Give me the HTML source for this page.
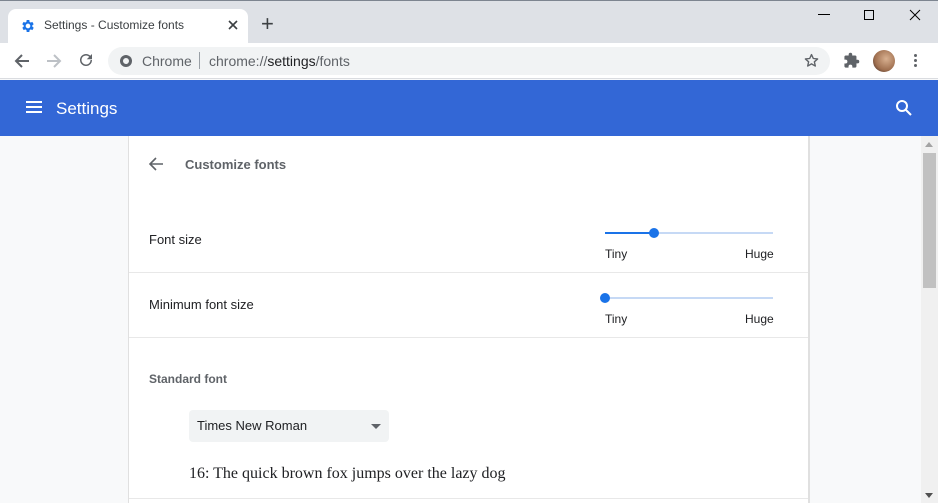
<!DOCTYPE html>
<html><head><style>
*{margin:0;padding:0;box-sizing:border-box}
body{width:938px;height:503px;overflow:hidden;font-family:"Liberation Sans",Arial,sans-serif;background:#f8f9fa;position:relative}
.abs{position:absolute}
</style></head><body>
<div class="abs" style="left:0;top:0;width:938px;height:43px;background:#dee1e6;border-top:1px solid #7d8590"></div>
<div class="abs" style="left:8px;top:9px;width:240px;height:35px;background:#fff;border-radius:8px 8px 0 0"></div>
<svg class="abs" style="left:20px;top:18px" width="16" height="16" viewBox="0 0 24 24"><path fill="#1a73e8" d="M19.4 13a7.5 7.5 0 000-2l2.1-1.6-2-3.5-2.5 1a7 7 0 00-1.7-1L15 3h-4l-.4 2.9a7 7 0 00-1.7 1l-2.5-1-2 3.5L6.6 11a7.5 7.5 0 000 2l-2.1 1.6 2 3.5 2.5-1a7 7 0 001.7 1L11 21h4l.4-2.9a7 7 0 001.7-1l2.5 1 2-3.5zM13 15.5a3.5 3.5 0 110-7 3.5 3.5 0 010 7z" transform="translate(-1 0)"/></svg>
<div class="abs" style="left:44px;top:18px;font-size:12px;color:#3c4043">Settings - Customize fonts</div>
<svg class="abs" style="left:228px;top:20px" width="10" height="10"><path d="M1 1L9 9M9 1L1 9" stroke="#3c4043" stroke-width="1.6"/></svg>
<div class="abs" style="left:261px;top:11px;font-size:22px;color:#3c4043;font-weight:300">+</div>
<div class="abs" style="left:818px;top:14px;width:12px;height:1px;background:#000"></div>
<div class="abs" style="left:864px;top:10px;width:10px;height:10px;border:1px solid #000"></div>
<svg class="abs" style="left:909px;top:9px" width="12" height="12"><path d="M1 1L11 11M11 1L1 11" stroke="#000" stroke-width="1"/></svg>
<div class="abs" style="left:0;top:43px;width:938px;height:36px;background:#fff;border-bottom:1px solid #dadce0"></div>
<svg class="abs" style="left:12px;top:52px" width="20" height="18" viewBox="0 0 20 18"><path d="M17 9H4M10 3L4 9l6 6" stroke="#5f6368" stroke-width="2" fill="none"/></svg>
<svg class="abs" style="left:44px;top:52px" width="20" height="18" viewBox="0 0 20 18"><path d="M3 9h13M10 3l6 6-6 6" stroke="#bdc1c6" stroke-width="2" fill="none"/></svg>
<svg class="abs" style="left:77px;top:51px" width="18" height="18" viewBox="0 0 24 24"><path fill="#5f6368" d="M17.65 6.35A7.96 7.96 0 0012 4a8 8 0 108 8h-2a6 6 0 11-1.78-4.22L13 11h7V4z"/></svg>
<div class="abs" style="left:108px;top:47px;width:722px;height:28px;background:#f1f3f4;border-radius:14px"></div>
<div class="abs" style="left:120px;top:55px;width:12px;height:12px;border-radius:50%;background:#5f6368"></div>
<div class="abs" style="left:123px;top:58px;width:6px;height:6px;border-radius:50%;background:#f1f3f4"></div>
<div class="abs" style="left:142px;top:53px;font-size:14px;color:#5f6368">Chrome</div>
<div class="abs" style="left:199px;top:52px;width:1px;height:17px;background:#9aa0a6"></div>
<div class="abs" style="left:209px;top:53px;font-size:14px;color:#5f6368">chrome://<span style="color:#202124">settings</span>/fonts</div>
<svg class="abs" style="left:804px;top:53px" width="15" height="15" viewBox="0 0 24 24"><path d="M12 2.5l2.9 6.3 6.9.7-5.2 4.6 1.5 6.8L12 17.4l-6.1 3.5 1.5-6.8-5.2-4.6 6.9-.7z" fill="none" stroke="#5f6368" stroke-width="2.2" stroke-linejoin="round"/></svg>
<svg class="abs" style="left:843px;top:52px" width="17" height="17" viewBox="0 0 24 24"><path fill="#5f6368" d="M20.5 11H19V7a2 2 0 00-2-2h-4V3.5a2.5 2.5 0 00-5 0V5H4a2 2 0 00-2 2v3.8h1.5a2.7 2.7 0 010 5.4H2V20a2 2 0 002 2h3.8v-1.5a2.7 2.7 0 015.4 0V22H17a2 2 0 002-2v-4h1.5a2.5 2.5 0 000-5z"/></svg>
<div class="abs" style="left:873px;top:50px;width:22px;height:22px;border-radius:50%;background:radial-gradient(circle at 60% 40%,#d8b090,#a07050 60%,#302020)"></div>
<div class="abs" style="left:914px;top:54px;width:3px;height:3px;border-radius:50%;background:#5f6368;box-shadow:0 5px 0 #5f6368,0 10px 0 #5f6368"></div>
<div class="abs" style="left:0;top:80px;width:938px;height:56px;background:#3367d6"></div>
<div class="abs" style="left:26px;top:101px;width:16px;height:2px;background:#fff;box-shadow:0 5px 0 #fff,0 10px 0 #fff"></div>
<div class="abs" style="left:56px;top:99px;font-size:17px;color:#fff">Settings</div>
<svg class="abs" style="left:895px;top:99px" width="18" height="18" viewBox="0 0 18 18"><circle cx="7" cy="7" r="5" stroke="#fff" stroke-width="2" fill="none"/><path d="M11 11l5 5" stroke="#fff" stroke-width="2"/></svg>
<div class="abs" style="left:128px;top:136px;width:682px;height:367px;background:#fff;border-left:1px solid #e0e0e0;border-right:2px solid #e0e0e0"></div>
<svg class="abs" style="left:148px;top:156px" width="16" height="16" viewBox="0 0 16 16"><path d="M15 8H2M8 2L2 8l6 6" stroke="#5f6368" stroke-width="1.6" fill="none"/></svg>
<div class="abs" style="left:185px;top:157px;font-size:13px;font-weight:bold;color:#5f6368">Customize fonts</div>
<div class="abs" style="left:149px;top:232px;font-size:13px;color:#202124">Font size</div>
<div class="abs" style="left:129px;top:272px;width:679px;height:1px;background:#e8e8e8"></div>
<div class="abs" style="left:149px;top:297px;font-size:13px;color:#202124">Minimum font size</div>
<div class="abs" style="left:129px;top:337px;width:679px;height:1px;background:#e8e8e8"></div>
<div class="abs" style="left:605px;top:232px;width:168px;height:2px;background:#c6d9f5"></div>
<div class="abs" style="left:605px;top:232px;width:49px;height:2px;background:#1a73e8"></div>
<div class="abs" style="left:649px;top:228px;width:10px;height:10px;border-radius:50%;background:#1a73e8"></div>
<div class="abs" style="left:605px;top:247px;font-size:12px;color:#202124">Tiny</div>
<div class="abs" style="left:745px;top:247px;font-size:12px;color:#202124">Huge</div>
<div class="abs" style="left:605px;top:297px;width:168px;height:2px;background:#c6d9f5"></div>
<div class="abs" style="left:600px;top:293px;width:10px;height:10px;border-radius:50%;background:#1a73e8"></div>
<div class="abs" style="left:605px;top:312px;font-size:12px;color:#202124">Tiny</div>
<div class="abs" style="left:745px;top:312px;font-size:12px;color:#202124">Huge</div>
<div class="abs" style="left:149px;top:372px;font-size:12px;font-weight:bold;color:#5f6368">Standard font</div>
<div class="abs" style="left:189px;top:410px;width:200px;height:32px;background:#f1f3f4;border-radius:4px"></div>
<div class="abs" style="left:197px;top:418px;font-size:13px;color:#202124">Times New Roman</div>
<div class="abs" style="left:371px;top:424px;border-left:5px solid transparent;border-right:5px solid transparent;border-top:5px solid #5f6368"></div>
<div class="abs" style="left:189px;top:465px;font-family:'Liberation Serif',serif;font-size:16px;color:#202124">16: The quick brown fox jumps over the lazy dog</div>
<div class="abs" style="left:129px;top:498px;width:679px;height:1px;background:#e8e8e8"></div>
<div class="abs" style="left:921px;top:136px;width:17px;height:367px;background:#f0f0f0"></div>
<div class="abs" style="left:925px;top:142px;border-left:4px solid transparent;border-right:4px solid transparent;border-bottom:5px solid #a3a3a3"></div>
<div class="abs" style="left:923px;top:153px;width:13px;height:135px;background:#c1c1c1"></div>
<div class="abs" style="left:925px;top:493px;border-left:4px solid transparent;border-right:4px solid transparent;border-top:5px solid #505050"></div>
</body></html>
